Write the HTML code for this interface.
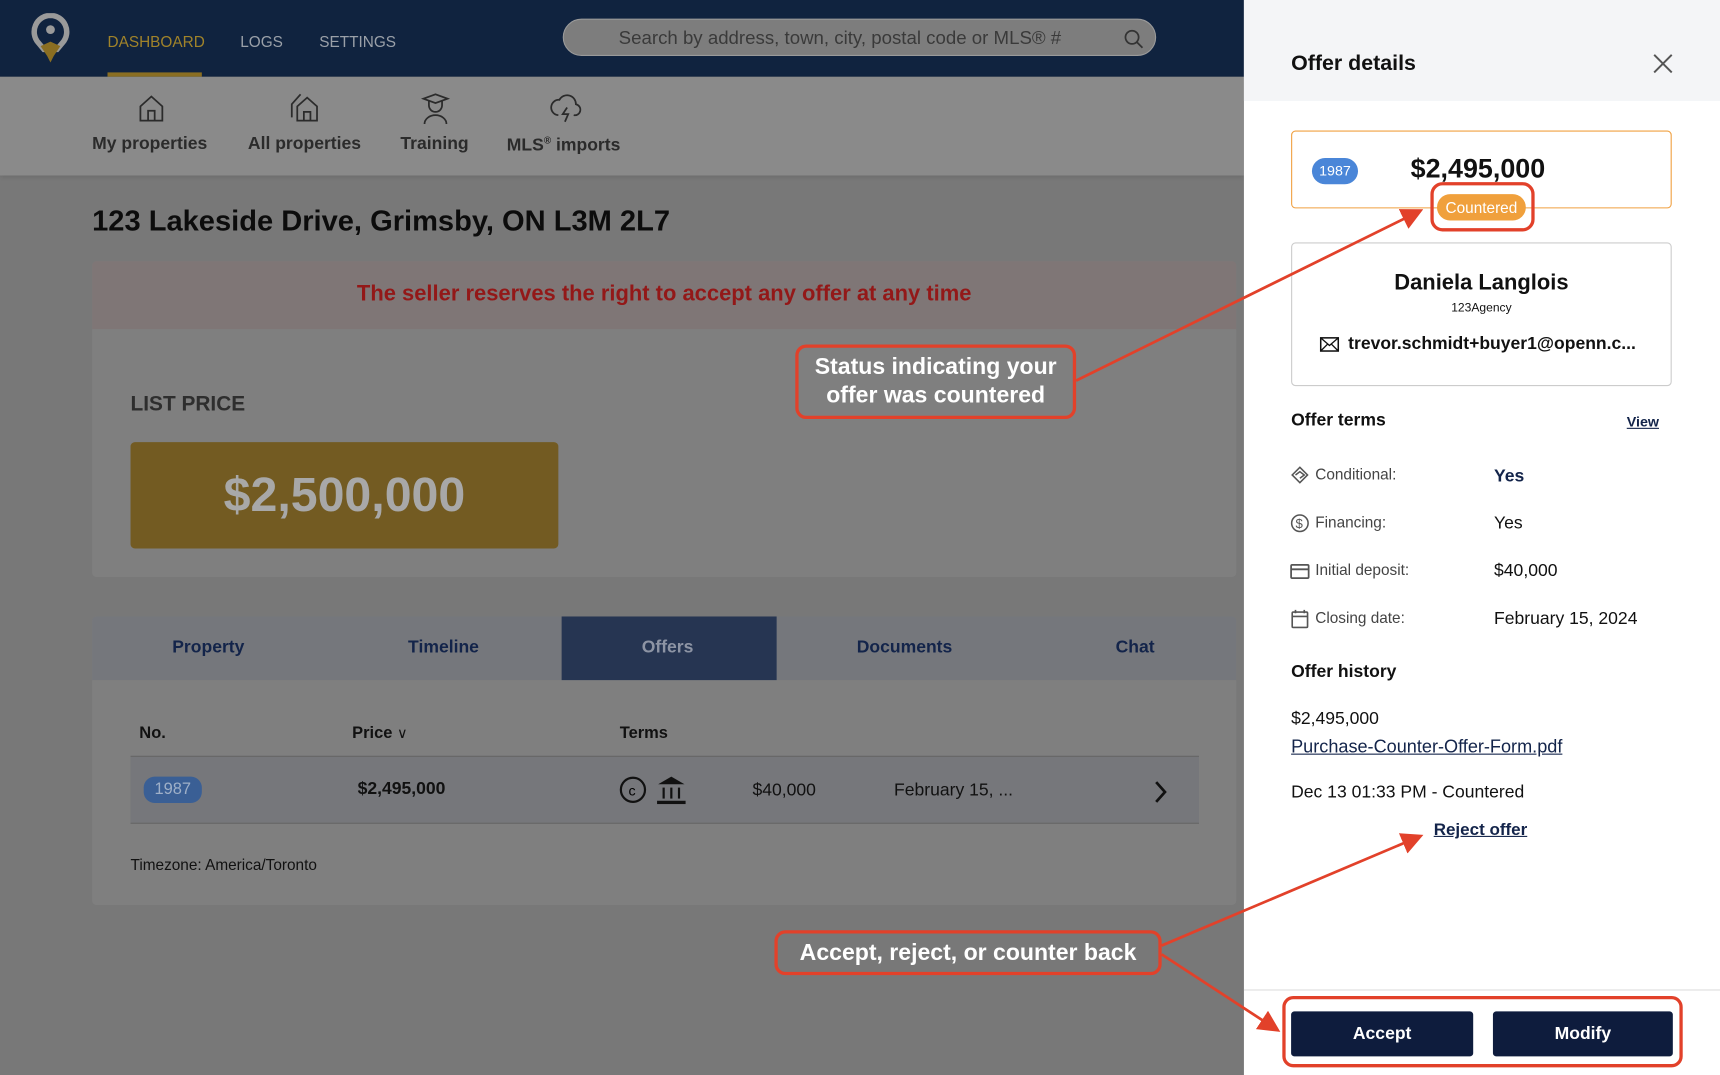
<!DOCTYPE html>
<html><head><meta charset="utf-8"><style>
*{margin:0;padding:0;box-sizing:border-box}
body{width:1720px;height:1075px;overflow:hidden;background:#787878;font-family:"Liberation Sans",sans-serif}
#s{position:absolute;left:0;top:0;width:1568px;height:980px;transform:scale(1.09694);transform-origin:0 0;background:#787878}
.a{position:absolute;white-space:nowrap}
.b{font-weight:bold}
</style></head><body><div id="s">
<!-- header -->
<div class="a" style="left:0;top:0;width:1134px;height:70px;background:#10233f"></div>
<svg class="a" style="left:28px;top:12px" width="36" height="46" viewBox="0 0 36 46"><path d="M18 2a15 15 0 0 0-11 25l5 6h12l5-6A15 15 0 0 0 18 2z" fill="none" stroke="#9a9a9a" stroke-width="5"/><circle cx="18" cy="15" r="4" fill="#9a9a9a"/><path d="M9 30l9-4 9 4-6 9-3 6-3-6z" fill="#8a6e22"/></svg>
<div class="a" style="left:98px;top:30px;font-size:14px;color:#a0832a">DASHBOARD</div>
<div class="a" style="left:98px;top:66px;width:86px;height:4px;background:#8a6e22"></div>
<div class="a" style="left:219px;top:30px;font-size:14px;color:#9aa0a8">LOGS</div>
<div class="a" style="left:291px;top:30px;font-size:14px;color:#9aa0a8">SETTINGS</div>
<div class="a" style="left:513px;top:17px;width:541px;height:34px;border-radius:17px;background:#7d7d7d;border:1px solid #9a9a9a"></div>
<div class="a" style="left:564px;top:25px;font-size:17px;color:#3a3a3a">Search by address, town, city, postal code or MLS® #</div>
<svg class="a" style="left:1024px;top:26px" width="20" height="20"><circle cx="8" cy="8" r="6" fill="none" stroke="#333" stroke-width="1.6"/><path d="M12.5 12.5l5 5" stroke="#333" stroke-width="1.6"/></svg>
<!-- subnav -->
<div class="a" style="left:0;top:70px;width:1134px;height:90px;background:#8a8a8a;box-shadow:0 2px 4px rgba(0,0,0,.1)"></div>
<svg class="a" style="left:126px;top:86px" width="24" height="26" fill="none" stroke="#2b2b2b" stroke-width="1.6"><path d="M2 11L12 2l10 9v13H2z"/><path d="M9 24V15h6v9"/></svg>
<svg class="a" style="left:264px;top:84px" width="30" height="28" fill="none" stroke="#2b2b2b" stroke-width="1.6"><path d="M7 13l9-8 9 8v13H7z"/><path d="M13 26v-8h6v8"/><path d="M2 23V11l8-9"/></svg>
<svg class="a" style="left:384px;top:84px" width="26" height="30" fill="none" stroke="#2b2b2b" stroke-width="1.6"><path d="M2 6l11-4 11 4-11 4z"/><path d="M7 8v4a6 6 0 0 0 12 0V8"/><path d="M3 29a10 8 0 0 1 20 0"/></svg>
<svg class="a" style="left:500px;top:84px" width="30" height="30" fill="none" stroke="#2b2b2b" stroke-width="1.6"><path d="M9 21a7 7 0 0 1 1-14 8 8 0 0 1 15 4 5 5 0 0 1-2 10"/><path d="M17 14l-4 6h5l-3 7"/></svg>
<div class="a b" style="left:84px;top:123px;font-size:16px;color:#2b2b2b">My properties</div>
<div class="a b" style="left:226px;top:123px;font-size:16px;color:#2b2b2b">All properties</div>
<div class="a b" style="left:365px;top:123px;font-size:16px;color:#2b2b2b">Training</div>
<div class="a b" style="left:462px;top:123px;font-size:16px;color:#2b2b2b">MLS<sup style="font-size:9px">®</sup> imports</div>
<!-- title -->
<div class="a b" style="left:84px;top:186px;font-size:26.5px;color:#0c0c0c">123 Lakeside Drive, Grimsby, ON L3M 2L7</div>
<!-- card 1 -->
<div class="a" style="left:84px;top:238px;width:1043px;height:288px;background:#7f7f7f;border-radius:4px;overflow:hidden">
 <div style="height:62px;background:#7f7676;text-align:center;padding-top:19px;font-size:20px;font-weight:bold;color:#931818">The seller reserves the right to accept any offer at any time</div>
</div>
<div class="a b" style="left:119px;top:358px;font-size:19px;color:#2e2e2e">LIST PRICE</div>
<div class="a" style="left:119px;top:403px;width:390px;height:97px;background:#735b22;border-radius:4px;text-align:center;line-height:97px;font-size:44px;font-weight:bold;color:#a8a8a8">$2,500,000</div>
<!-- card 2 -->
<div class="a" style="left:84px;top:562px;width:1043px;height:263px;background:#7f7f7f;border-radius:4px;overflow:hidden">
 <div style="height:58px;background:#75777c"></div>
</div>
<div class="a" style="left:512px;top:562px;width:196px;height:58px;background:#263552"></div>
<div class="a b" style="left:157px;top:582px;font-size:16px;color:#13244a">Property</div>
<div class="a b" style="left:372px;top:582px;font-size:16px;color:#13244a">Timeline</div>
<div class="a b" style="left:585px;top:582px;font-size:16px;color:#8d94a4">Offers</div>
<div class="a b" style="left:781px;top:582px;font-size:16px;color:#13244a">Documents</div>
<div class="a b" style="left:1017px;top:582px;font-size:16px;color:#13244a">Chat</div>
<div class="a b" style="left:127px;top:660px;font-size:15px;color:#111">No.</div>
<div class="a b" style="left:321px;top:660px;font-size:15px;color:#111">Price <span style="font-weight:normal;font-size:13px">∨</span></div>
<div class="a b" style="left:565px;top:660px;font-size:15px;color:#111">Terms</div>
<div class="a" style="left:119px;top:689px;width:974px;height:62px;background:#76777b;border-top:1px solid #666;border-bottom:1px solid #666"></div>
<div class="a" style="left:131px;top:708px;width:53px;height:24px;border-radius:10px;background:#3a5f95;color:#9fb0c8;font-size:15px;text-align:center;line-height:24px">1987</div>
<div class="a b" style="left:326px;top:711px;font-size:16px;color:#111">$2,495,000</div>
<svg class="a" style="left:564px;top:706px" width="66" height="30"><circle cx="13" cy="14" r="11" fill="none" stroke="#111" stroke-width="2"/><text x="9" y="19" font-size="13" font-family="Liberation Sans">c</text><path d="M36 9l12-7 12 7z" fill="#111"/><rect x="40" y="12" width="2" height="10" fill="#111"/><rect x="47" y="12" width="2" height="10" fill="#111"/><rect x="54" y="12" width="2" height="10" fill="#111"/><rect x="35" y="24" width="26" height="3" fill="#111"/></svg>
<div class="a" style="left:686px;top:712px;font-size:16px;color:#111">$40,000</div>
<div class="a" style="left:815px;top:712px;font-size:16px;color:#111">February 15, ...</div>
<svg class="a" style="left:1050px;top:710px" width="16" height="24"><path d="M4 3l8 9-8 9" fill="none" stroke="#111" stroke-width="2.5"/></svg>
<div class="a" style="left:119px;top:780px;font-size:14px;color:#111">Timezone: America/Toronto</div>
<!-- annotations -->
<div class="a" style="left:725px;top:314px;width:256px;height:68px;border:3px solid #e2412a;border-radius:10px;color:#fff;font-weight:bold;font-size:21px;text-align:center;line-height:26px;padding-top:5px">Status indicating your<br>offer was countered</div>
<div class="a" style="left:706px;top:848px;width:353px;height:41px;border:3px solid #e2412a;border-radius:10px;color:#fff;font-weight:bold;font-size:21px;text-align:center;line-height:35px">Accept, reject, or counter back</div>
<!-- right panel -->
<div class="a" style="left:1134px;top:0;width:434px;height:980px;background:#fff"></div>
<div class="a" style="left:1134px;top:0;width:434px;height:92px;background:#f4f5f7"></div>
<div class="a b" style="left:1177px;top:47px;font-size:19.5px;color:#111">Offer details</div>
<svg class="a" style="left:1506px;top:48px" width="20" height="20"><path d="M2 2l16 16M18 2L2 18" stroke="#555" stroke-width="1.8"/></svg>
<div class="a" style="left:1177px;top:119px;width:347px;height:71px;border:1.5px solid #f0a040;border-radius:4px"></div>
<div class="a" style="left:1196px;top:144px;width:42px;height:24px;border-radius:12px;background:#4a86d8;color:#fff;font-size:13px;text-align:center;line-height:24px">1987</div>
<div class="a b" style="left:1286px;top:141px;font-size:24.5px;color:#111">$2,495,000</div>
<div class="a" style="left:1310px;top:177px;width:81px;height:24px;border-radius:12px;background:#f0a03c;color:#fff;font-size:14px;text-align:center;line-height:24px">Countered</div>
<div class="a" style="left:1304px;top:166px;width:95px;height:45px;border:3px solid #e2412a;border-radius:11px"></div>
<div class="a" style="left:1177px;top:221px;width:347px;height:131px;border:1.5px solid #ccc;border-radius:4px"></div>
<div class="a b" style="left:1177px;top:247px;width:347px;text-align:center;font-size:20px;color:#111">Daniela Langlois</div>
<div class="a" style="left:1177px;top:275px;width:347px;text-align:center;font-size:11px;color:#111">123Agency</div>
<svg class="a" style="left:1203px;top:307px" width="18" height="14"><rect x="1" y="1" width="16" height="12" fill="none" stroke="#111" stroke-width="1.4"/><path d="M1 1l8 7 8-7M1 13l6-6M17 13l-6-6" fill="none" stroke="#111" stroke-width="1.2"/></svg>
<div class="a b" style="left:1229px;top:305px;font-size:16px;color:#111">trevor.schmidt+buyer1@openn.c...</div>
<div class="a b" style="left:1177px;top:375px;font-size:16px;color:#111">Offer terms</div>
<div class="a b" style="left:1483px;top:377px;font-size:13px;color:#13244a;text-decoration:underline">View</div>
<svg class="a" style="left:1176px;top:424px" width="18" height="18" fill="none" stroke="#555" stroke-width="1.4"><path d="M9 2l7 7-7 7-7-7z"/><path d="M5 9l4-3 4 3-4 3"/></svg>
<svg class="a" style="left:1176px;top:468px" width="18" height="18"><circle cx="9" cy="9" r="7.5" fill="none" stroke="#555" stroke-width="1.4"/><text x="5" y="13.5" font-size="12" fill="#555" font-family="Liberation Sans">$</text></svg>
<svg class="a" style="left:1176px;top:513px" width="18" height="16" fill="none" stroke="#555" stroke-width="1.6"><rect x="1" y="2" width="16" height="12" rx="1"/><path d="M1 6h16"/></svg>
<svg class="a" style="left:1177px;top:555px" width="16" height="18" fill="none" stroke="#555" stroke-width="1.5"><rect x="1" y="3" width="14" height="14" rx="1"/><path d="M1 7h14M4 1v3M12 1v3"/></svg>
<div class="a" style="left:1199px;top:424px;font-size:14px;color:#444">Conditional:</div>
<div class="a" style="left:1199px;top:468px;font-size:14px;color:#444">Financing:</div>
<div class="a" style="left:1199px;top:511px;font-size:14px;color:#444">Initial deposit:</div>
<div class="a" style="left:1199px;top:555px;font-size:14px;color:#444">Closing date:</div>
<div class="a b" style="left:1362px;top:426px;font-size:16px;color:#13244a">Yes</div>
<div class="a" style="left:1362px;top:469px;font-size:16px;color:#111">Yes</div>
<div class="a" style="left:1362px;top:512px;font-size:16px;color:#111">$40,000</div>
<div class="a" style="left:1362px;top:556px;font-size:16px;color:#111">February 15, 2024</div>
<div class="a b" style="left:1177px;top:604px;font-size:16px;color:#111">Offer history</div>
<div class="a" style="left:1177px;top:647px;font-size:16px;color:#111">$2,495,000</div>
<div class="a" style="left:1177px;top:672px;font-size:16.5px;color:#13244a;text-decoration:underline">Purchase-Counter-Offer-Form.pdf</div>
<div class="a" style="left:1177px;top:714px;font-size:16px;color:#111">Dec 13 01:33 PM - Countered</div>
<div class="a b" style="left:1307px;top:748px;font-size:15.5px;color:#13244a;text-decoration:underline">Reject offer</div>
<div class="a" style="left:1134px;top:902px;width:434px;height:1px;background:#ddd"></div>
<div class="a b" style="left:1177px;top:922px;width:166px;height:41px;background:#0e1c3d;border-radius:3px;color:#fff;font-size:16px;text-align:center;line-height:41px">Accept</div>
<div class="a b" style="left:1361px;top:922px;width:164px;height:41px;background:#0e1c3d;border-radius:3px;color:#fff;font-size:16px;text-align:center;line-height:41px">Modify</div>
<div class="a" style="left:1169px;top:908px;width:365px;height:65px;border:3px solid #e2412a;border-radius:10px"></div>
<!-- arrows -->
<svg class="a" style="left:0;top:0" width="1568" height="980"><defs><marker id="m" markerWidth="8" markerHeight="8" refX="6" refY="4" orient="auto" markerUnits="strokeWidth"><path d="M0 0L8 4 0 8z" fill="#e2412a"/></marker></defs>
<g stroke="#e2412a" stroke-width="2.5" fill="none" marker-end="url(#m)"><path d="M981 347L1293 193"/><path d="M1059 862L1293 763"/><path d="M1059 870L1163 938"/></g></svg>
</div></body></html>
